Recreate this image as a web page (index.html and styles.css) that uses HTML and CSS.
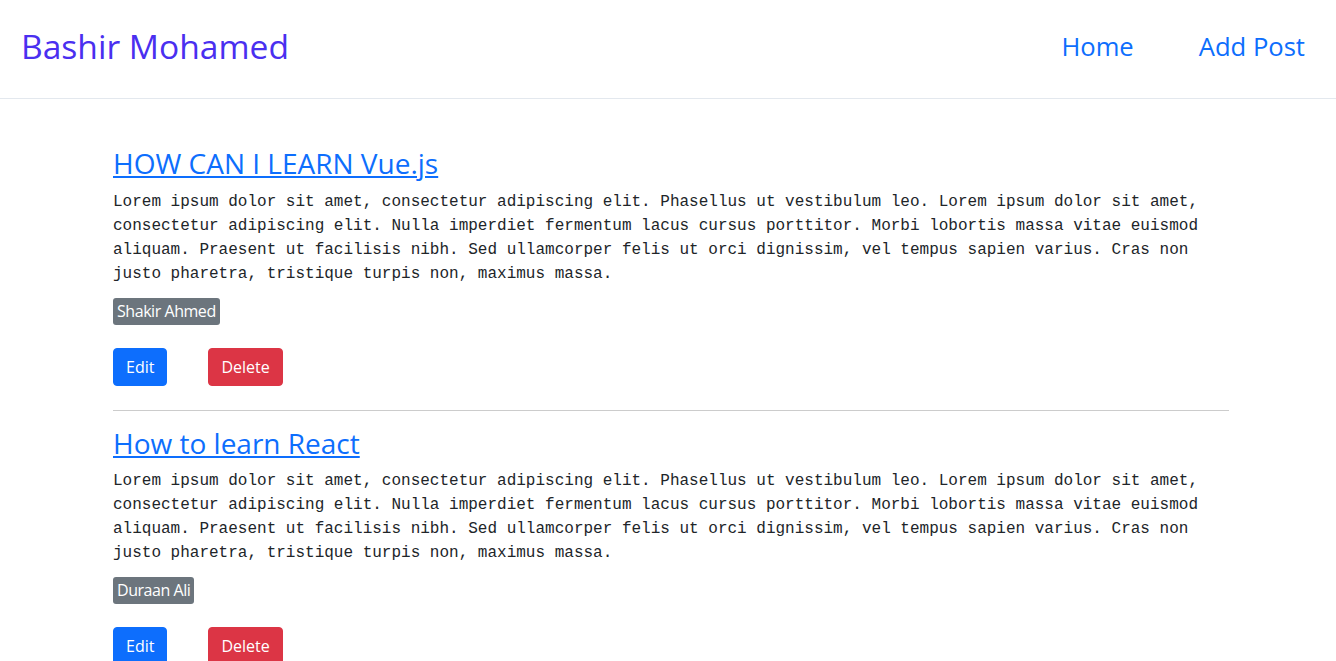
FILE: index.html
```html
<!DOCTYPE html>
<html lang="en">
<head>
<meta charset="utf-8">
<title>Bashir Mohamed</title>
<link rel="stylesheet" href="styles.css">
</head>
<body>
<nav class="navbar">
  <a class="brand" href="#">Bashir Mohamed</a>
  <div class="nav-links">
    <a class="nav-link" href="#">Home</a>
    <a class="nav-link" href="#">Add Post</a>
  </div>
</nav>
<main class="container">
  <article class="post">
    <h2 class="post-title"><a href="#">HOW CAN I LEARN Vue.js</a></h2>
    <p class="post-body">Lorem ipsum dolor sit amet, consectetur adipiscing elit. Phasellus ut vestibulum leo. Lorem ipsum dolor sit amet, consectetur adipiscing elit. Nulla imperdiet fermentum lacus cursus porttitor. Morbi lobortis massa vitae euismod aliquam. Praesent ut facilisis nibh. Sed ullamcorper felis ut orci dignissim, vel tempus sapien varius. Cras non justo pharetra, tristique turpis non, maximus massa.</p>
    <span class="badge">Shakir Ahmed</span>
    <div class="actions">
      <button class="btn btn-primary">Edit</button>
      <button class="btn btn-danger">Delete</button>
    </div>
  </article>
  <hr class="divider">
  <article class="post">
    <h2 class="post-title"><a href="#">How to learn React</a></h2>
    <p class="post-body">Lorem ipsum dolor sit amet, consectetur adipiscing elit. Phasellus ut vestibulum leo. Lorem ipsum dolor sit amet, consectetur adipiscing elit. Nulla imperdiet fermentum lacus cursus porttitor. Morbi lobortis massa vitae euismod aliquam. Praesent ut facilisis nibh. Sed ullamcorper felis ut orci dignissim, vel tempus sapien varius. Cras non justo pharetra, tristique turpis non, maximus massa.</p>
    <span class="badge">Duraan Ali</span>
    <div class="actions">
      <button class="btn btn-primary">Edit</button>
      <button class="btn btn-danger">Delete</button>
    </div>
  </article>
  <hr class="divider">
</main>
</body>
</html>
```
FILE: styles.css
```css
* { box-sizing: border-box; }
html, body { margin: 0; padding: 0; }
body {
  font-family: "Open Sans", "Liberation Sans", sans-serif;
  color: #212529;
  background: #fff;
}
.navbar {
  display: flex;
  justify-content: space-between;
  align-items: center;
  height: 99px;
  padding: 0 31px 6px 21px;
  border-bottom: 1px solid #e3e8ee;
}
.brand {
  font-size: 33.6px;
  color: #4a2ff0;
  text-decoration: none;
}
.nav-links {
  display: flex;
  gap: 65px;
}
.nav-link {
  font-size: 25.6px;
  color: #0d6efd;
  text-decoration: none;
}
.container {
  width: 1116px;
  margin: 0 0 0 113px;
  padding-top: 48px;
}
.post {
  display: flex;
  flex-direction: column;
  align-items: flex-start;
}
.post-title {
  margin: 0 0 9px;
  font-size: 28px;
  font-weight: 400;
  line-height: 1.2;
}
.post-title a { color: #0d6efd; }
.post-body {
  margin: 0 0 12px;
  font-family: "Liberation Mono", "DejaVu Sans Mono", monospace;
  font-size: 16px;
  line-height: 24px;
  color: #212529;
}
.badge {
  display: block;
  padding: 4px 4px;
  font-size: 16px;
  letter-spacing: -0.45px;
  line-height: 19px;
  color: #fff;
  background: #6c757d;
  border-radius: 3px;
}
.actions {
  display: flex;
  gap: 41px;
  margin-top: 23px;
}
.btn {
  font-family: "Open Sans", "Liberation Sans", sans-serif;
  font-size: 16px;
  line-height: 24px;
  padding: 6px 12px;
  border: 1px solid transparent;
  border-radius: 4px;
  color: #fff;
  cursor: pointer;
}
.btn-primary { background: #0d6efd; border-color: #0d6efd; }
.btn-danger { background: #dc3545; border-color: #dc3545; }
.divider {
  margin: 24px 0 16px;
  border: 0;
  border-top: 1px solid #ccc;
}
```
